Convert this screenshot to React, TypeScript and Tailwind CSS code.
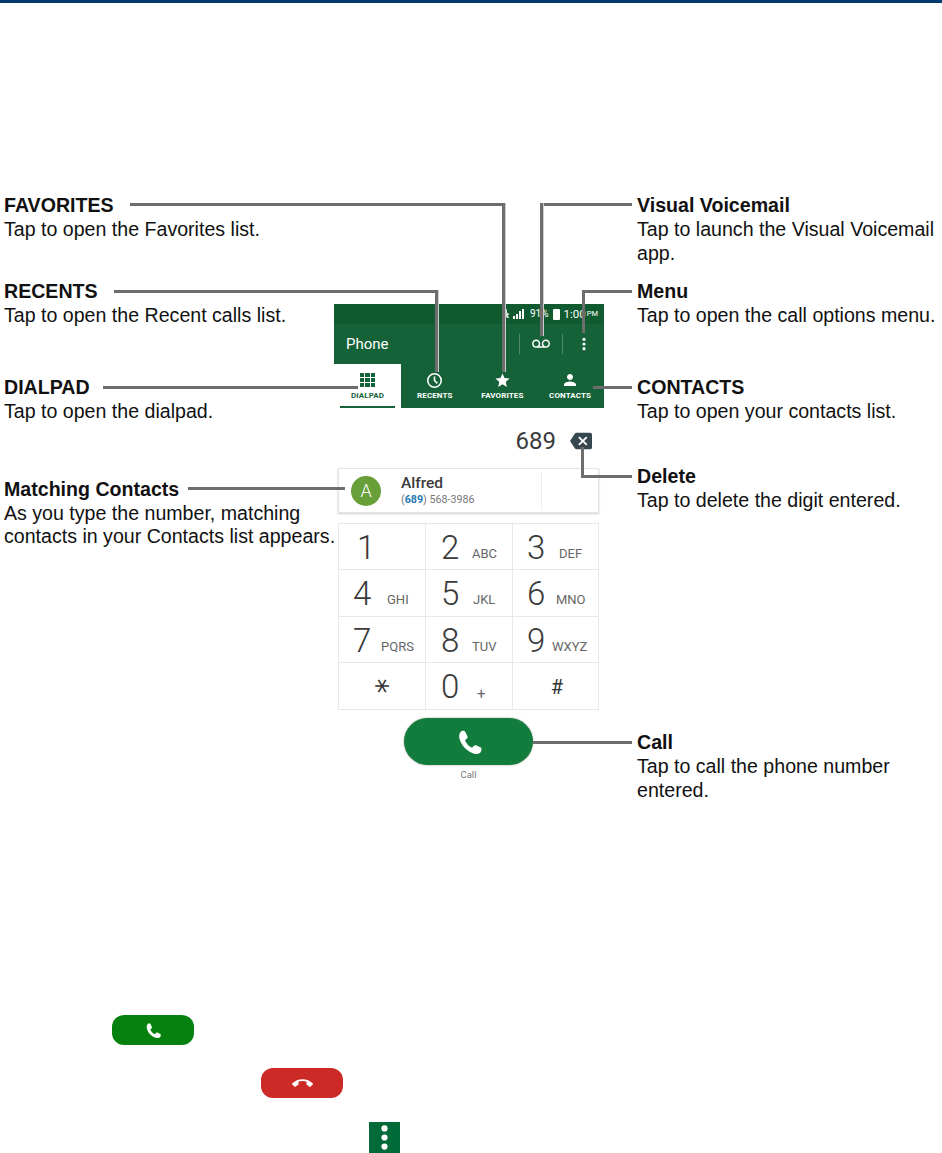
const CALL = "M6 3C4 3.5 3 6 3.5 9C5 15 10 20 16 21.5C18.5 22 20.5 21 21 19L21.2 17.5C21.2 16.8 20.8 16.4 20.2 16.1L16.8 14.6C16.2 14.4 15.6 14.6 15.2 15L13.6 16.6C11 15.4 9 13.2 8 10.6L9.6 9.2C10.1 8.8 10.2 8.2 10 7.6L8.2 3.8C7.9 3.2 7 2.8 6 3Z";
const CALL_END = "M12 9c-1.6 0-3.15.25-4.6.72v3.1c0 .39-.23.74-.56.9-.98.49-1.87 1.12-2.66 1.85-.18.18-.43.28-.7.28-.28 0-.53-.11-.71-.29L.29 13.08c-.18-.17-.29-.42-.29-.7 0-.28.11-.53.29-.71C3.34 8.78 7.46 7 12 7s8.66 1.78 11.71 4.67c.18.18.29.43.29.71 0 .28-.11.53-.29.71l-2.48 2.48c-.18.18-.43.29-.71.29-.27 0-.52-.11-.7-.28-.79-.74-1.69-1.36-2.67-1.85-.33-.16-.56-.5-.56-.9v-3.1C15.15 9.25 13.6 9 12 9z";
const VOICEMAIL = "M18.5 6C15.46 6 13 8.46 13 11.5c0 1.33.47 2.55 1.26 3.5H9.74c.79-.95 1.26-2.17 1.26-3.5C11 8.46 8.54 6 5.5 6S0 8.46 0 11.5 2.46 17 5.5 17h13c3.04 0 5.5-2.46 5.5-5.5S21.54 6 18.5 6zm-13 9C3.57 15 2 13.43 2 11.5S3.57 8 5.5 8 9 9.57 9 11.5 7.43 15 5.5 15zm13 0c-1.93 0-3.5-1.57-3.5-3.5S16.57 8 18.5 8 22 9.57 22 11.5 20.43 15 18.5 15z";
const PERSON = "M12 12c2.21 0 4-1.79 4-4s-1.79-4-4-4-4 1.79-4 4 1.79 4 4 4zm0 2c-2.67 0-8 1.34-8 4v2h16v-2c0-2.66-5.33-4-8-4z";
const STAR = "M12 17.27L18.18 21l-1.64-7.03L22 9.24l-7.19-.61L12 2 9.19 8.63 2 9.24l5.46 4.73L5.82 21z";
const BACKSPACE = "M22 3H7c-.69 0-1.23.35-1.59.88L0 12l5.41 8.11c.36.53.9.89 1.59.89h15c1.1 0 2-.9 2-2V5c0-1.1-.9-2-2-2zm-3 12.59L17.59 17 14 13.41 10.41 17 9 15.59 12.59 12 9 8.41 10.41 7 14 10.59 17.59 7 19 8.41 15.41 12 19 15.59z";

function Icon({ d, className }: { d: string; className: string }) {
  return (
    <svg viewBox="0 0 24 24" className={className} fill="currentColor">
      <path d={d} />
    </svg>
  );
}

function Dots({ className }: { className: string }) {
  return (
    <svg viewBox="0 0 24 24" className={className} fill="currentColor">
      <circle cx="12" cy="5" r="2.4" />
      <circle cx="12" cy="12" r="2.4" />
      <circle cx="12" cy="19" r="2.4" />
    </svg>
  );
}

function Callout({ title, lines, className }: { title: string; lines: string[]; className: string }) {
  return (
    <div className={"whitespace-nowrap " + className}>
      <div className="font-bold">{title}</div>
      {lines.map((l) => (
        <div key={l}>{l}</div>
      ))}
    </div>
  );
}

function Tab({ label, children, active }: { label: string; children: React.ReactNode; active?: boolean }) {
  return (
    <div
      className={
        active
          ? "relative flex w-[67px] flex-col items-center bg-white pt-[8px] text-[#156238]"
          : "flex w-[67.6px] flex-col items-center pt-[8px] text-white"
      }
    >
      <div className="flex h-[16px] w-[16px] items-center justify-center">{children}</div>
      <div className="mt-[2px] whitespace-nowrap text-[8px] font-bold leading-[12px] tracking-[0.1px]">{label}</div>
      {active && <div className="absolute bottom-0 left-[6px] h-[2px] w-[55px] bg-[#156238]" />}
    </div>
  );
}

function Key({ d, s, wide, sCls, dCls }: { d: string; s?: string; wide?: boolean; sCls: string; dCls: string }) {
  return (
    <div className={(wide ? "flex-1 " : "w-[87px] ") + "relative border-r border-[#e8e8e8] last:border-r-0"}>
      <span className={"absolute top-[6px] text-[33px] font-light leading-[36px] text-[#3a3a3a] " + dCls}>{d}</span>
      {s && <span className={"absolute top-[22px] text-[13px] leading-[16px] text-[#666] " + sCls}>{s}</span>}
    </div>
  );
}

function Row({ children, last }: { children: React.ReactNode; last?: boolean }) {
  return <div className={"flex h-[46.25px] " + (last ? "" : "border-b border-[#e8e8e8]")}>{children}</div>;
}

export default function App() {
  return (
    <div className="relative h-[1153px] w-[942px] overflow-hidden bg-white font-['Liberation_Sans',Arial,sans-serif] text-[19.6px] leading-[24px] text-[#111]">
      <div className="h-[3px] bg-[#003a70]" />

      <div className="flex pt-[190px]">
        <div className="w-[337px] shrink-0 pl-[4px]">
          <Callout title="FAVORITES" lines={["Tap to open the Favorites list."]} className="" />
          <Callout title="RECENTS" lines={["Tap to open the Recent calls list."]} className="mt-[38px]" />
          <Callout title="DIALPAD" lines={["Tap to open the dialpad."]} className="mt-[48px]" />
          <Callout
            title="Matching Contacts"
            lines={["As you type the number, matching", "contacts in your Contacts list appears."]}
            className="mt-[55px] leading-[23.5px]"
          />
        </div>

        <div className="-ml-[3px] mt-[111px] w-[270px] shrink-0 font-['Roboto',sans-serif]">
          <div className="flex h-[20px] items-center justify-end bg-[#115a30] pr-[6px] text-[10px] text-white">
            <svg viewBox="0 0 10 12" className="mr-[2px] h-[12px] w-[8px]" fill="#cfe0d6">
              <path d="M3 0h2v4l3 2-2 2 2 3H5L3 8 1 10 0 8l2-2z" />
            </svg>
            <div className="flex h-[10px] items-end gap-[1px]">
              <span className="h-[3px] w-[2px] bg-white" />
              <span className="h-[5px] w-[2px] bg-white" />
              <span className="h-[8px] w-[2px] bg-white" />
              <span className="h-[10px] w-[2px] bg-white" />
            </div>
            <span className="ml-[6px] text-[10px]">91%</span>
            <span className="ml-[4px] h-[11px] w-[7px] rounded-[1px] bg-white" />
            <span className="ml-[4px] text-[11.5px]">1:00</span>
            <span className="ml-[1px] text-[7.5px]">PM</span>
          </div>
          <div className="flex h-[40px] items-center bg-[#156238] pl-[12px] text-white">
            <span className="text-[15px] leading-[40px]">Phone</span>
            <div className="ml-auto flex items-center">
              <span className="h-[20px] w-px bg-[#4f8a68]" />
              <Icon d={VOICEMAIL} className="mx-[12px] h-[18px] w-[18px]" />
              <span className="h-[20px] w-px bg-[#4f8a68]" />
              <Dots className="mx-[12.5px] h-[16px] w-[16px]" />
            </div>
          </div>
          <div className="flex h-[44px] bg-[#156238]">
            <Tab label="DIALPAD" active>
              <div className="grid h-[14px] w-[15px] shrink-0 grid-cols-3 gap-[1px]">
                {[0, 1, 2, 3, 4, 5, 6, 7, 8].map((i) => (
                  <span key={i} className="bg-[#156238]" />
                ))}
              </div>
            </Tab>
            <Tab label="RECENTS">
              <svg viewBox="0 0 24 24" className="h-[17px] w-[17px] shrink-0" fill="none" stroke="currentColor" strokeWidth="2.2">
                <circle cx="12" cy="12" r="9.5" />
                <path d="M12 6.5V12l4 4" />
              </svg>
            </Tab>
            <Tab label="FAVORITES">
              <Icon d={STAR} className="h-[17px] w-[17px] shrink-0" />
            </Tab>
            <Tab label="CONTACTS">
              <Icon d={PERSON} className="h-[18px] w-[18px] shrink-0" />
            </Tab>
          </div>

          <div className="flex h-[60px] items-center justify-end pr-[12px] pt-[5px]">
            <span className="text-[24px] leading-[30px] text-[#3a3a3a]">689</span>
            <Icon d={BACKSPACE} className="ml-[14px] h-[22px] w-[22px] text-[#37474f]" />
          </div>

          <div className="ml-[4px] flex h-[45px] w-[261px] items-center border border-[#e4e4e4] shadow-[0_1px_2px_#cccccc]">
            <div className="ml-[12px] flex h-[30px] w-[30px] items-center justify-center rounded-full bg-[#689f38] text-[18px] font-light text-white">
              A
            </div>
            <div className="ml-[20px] -mt-[1px]">
              <div className="text-[15.5px] font-medium leading-[17px] text-[#3a3a3a]">Alfred</div>
              <div className="mt-[1px] text-[10.7px] leading-[13px] text-[#777]">
                (<span className="font-bold text-[#1f78b4]">689</span>) 568-3986
              </div>
            </div>
            <div className="ml-auto mr-[56px] h-[38px] w-px bg-[#eeeeee]" />
          </div>

          <div className="ml-[4px] mt-[10px] w-[261px] border border-[#e8e8e8]">
            <Row>
              <Key d="1" dCls="left-[18px]" sCls="" />
              <Key d="2" s="ABC" dCls="left-[15px]" sCls="left-[46px]" />
              <Key d="3" s="DEF" wide dCls="left-[14px]" sCls="left-[46px]" />
            </Row>
            <Row>
              <Key d="4" s="GHI" dCls="left-[14px]" sCls="left-[48px]" />
              <Key d="5" s="JKL" dCls="left-[15px]" sCls="left-[47px]" />
              <Key d="6" s="MNO" wide dCls="left-[14px]" sCls="left-[43px]" />
            </Row>
            <Row>
              <Key d="7" s="PQRS" dCls="left-[14px]" sCls="left-[42px]" />
              <Key d="8" s="TUV" dCls="left-[15px]" sCls="left-[46px]" />
              <Key d="9" s="WXYZ" wide dCls="left-[14px]" sCls="left-[39px]" />
            </Row>
            <Row last>
              <div className="flex w-[87px] items-center justify-center overflow-hidden border-r border-[#e8e8e8] pr-[12px] text-[#333]">
                <span className="inline-block rotate-90 font-['DejaVu_Sans',sans-serif] text-[30px] leading-[30px]">*</span>
              </div>
              <Key d="0" s="+" dCls="left-[15px]" sCls="left-[51px] top-[23px] text-[15px]" />
              <div className="flex flex-1 items-center justify-center pl-[3px] pt-[2px] text-[20px] text-[#333]">#</div>
            </Row>
          </div>

          <div className="ml-[70px] mt-[8px] flex h-[47px] w-[129px] items-center justify-center rounded-full bg-[#127c3c] pl-[2px] text-white shadow-[0_0_2px_#999999]">
            <Icon d={CALL} className="h-[30px] w-[30px]" />
          </div>
          <div className="ml-[70px] mt-[3px] w-[129px] text-center text-[9.5px] leading-[14px] text-[#777]">Call</div>
        </div>

        <div className="ml-[33px] flex-1">
          <Callout title="Visual Voicemail" lines={["Tap to launch the Visual Voicemail", "app."]} className="" />
          <Callout title="Menu" lines={["Tap to open the call options menu."]} className="mt-[14px]" />
          <Callout title="CONTACTS" lines={["Tap to open your contacts list."]} className="mt-[48px]" />
          <Callout title="Delete" lines={["Tap to delete the digit entered."]} className="mt-[41px]" />
          <Callout title="Call" lines={["Tap to call the phone number", "entered."]} className="mt-[218px]" />
        </div>
      </div>

      <div className="mt-[213px] pl-[112px]">
        <div className="flex h-[30px] w-[82px] items-center justify-center rounded-[12px] bg-[#06800f] text-white">
          <Icon d={CALL} className="h-[19px] w-[19px]" />
        </div>
        <div className="ml-[149px] mt-[23px] flex h-[30px] w-[82px] items-center justify-center rounded-[12px] bg-[#cc2a27] text-white">
          <Icon d={CALL_END} className="h-[21px] w-[21px]" />
        </div>
        <div className="ml-[257px] mt-[24px] flex h-[31px] w-[31px] items-center justify-center bg-[#006a38] text-white">
          <Dots className="h-[31px] w-[31px]" />
        </div>
      </div>

      {/* leader lines */}
      <div className="absolute left-[130px] top-[203px] h-[3px] w-[375px] bg-[#6d6d6d]" />
      <div className="absolute left-[502px] top-[203px] h-[169px] w-[3px] bg-[#6d6d6d] shadow-[1px_0_0_#cccccc]" />
      <div className="absolute left-[114px] top-[290px] h-[3px] w-[323px] bg-[#6d6d6d]" />
      <div className="absolute left-[435px] top-[290px] h-[82px] w-[3px] bg-[#6d6d6d] shadow-[1px_0_0_#cccccc]" />
      <div className="absolute left-[103px] top-[386px] h-[3px] w-[255px] bg-[#6d6d6d]" />
      <div className="absolute left-[188px] top-[487px] h-[3px] w-[157px] bg-[#6d6d6d]" />
      <div className="absolute left-[540px] top-[203px] h-[3px] w-[92px] bg-[#6d6d6d]" />
      <div className="absolute left-[540px] top-[203px] h-[133px] w-[3px] bg-[#6d6d6d] shadow-[1px_0_0_#cccccc]" />
      <div className="absolute left-[582px] top-[290px] h-[3px] w-[50px] bg-[#6d6d6d]" />
      <div className="absolute left-[582px] top-[290px] h-[43px] w-[3px] bg-[#6d6d6d]" />
      <div className="absolute left-[593px] top-[386px] h-[3px] w-[39px] bg-[#6d6d6d]" />
      <div className="absolute left-[581px] top-[447px] h-[31px] w-[3px] bg-[#6d6d6d]" />
      <div className="absolute left-[581px] top-[475px] h-[3px] w-[51px] bg-[#6d6d6d]" />
      <div className="absolute left-[533px] top-[741px] h-[3px] w-[99px] bg-[#6d6d6d]" />
    </div>
  );
}
